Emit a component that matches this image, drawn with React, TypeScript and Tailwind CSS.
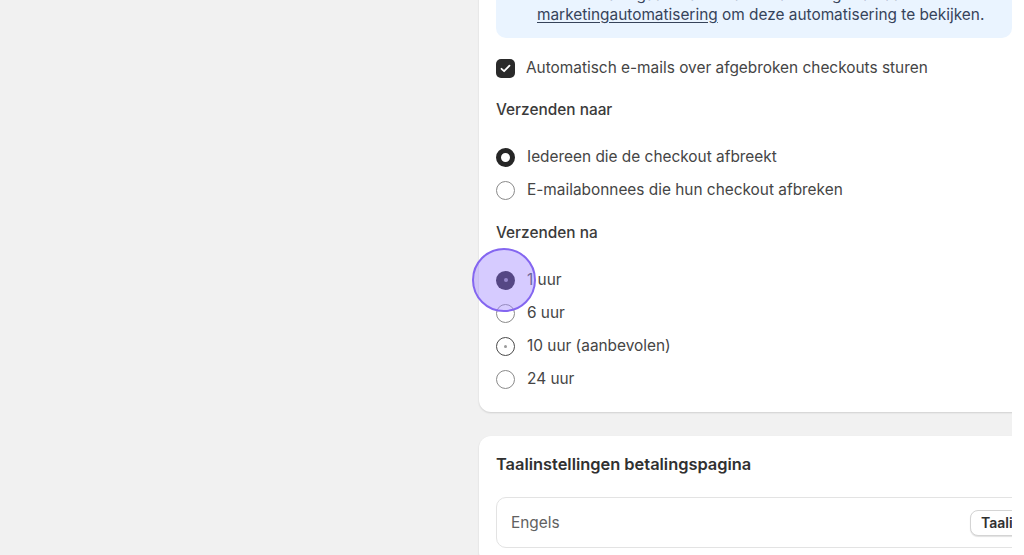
import React from "react";

type RadioState = "checked" | "unchecked" | "pressed" | "hover";

const Radio: React.FC<{ state: RadioState }> = ({ state }) => {
  if (state === "checked") {
    return <span className="w-[19px] h-[19px] rounded-full border-[5px] border-[#262626] bg-white shrink-0" />;
  }
  if (state === "pressed") {
    return (
      <span className="w-[19px] h-[19px] rounded-full bg-[#14101f] shrink-0 flex items-center justify-center">
        <span className="w-[4px] h-[4px] rounded-full bg-[#8d86a3]" />
      </span>
    );
  }
  if (state === "hover") {
    return (
      <span className="w-[19px] h-[19px] rounded-full border-[1.5px] border-[#4a4a4a] bg-white shrink-0 flex items-center justify-center">
        <span className="w-[3px] h-[3px] rounded-full bg-[#9a9a9a]" />
      </span>
    );
  }
  return <span className="w-[19px] h-[19px] rounded-full border-[1.5px] border-[#8a8a8a] bg-white shrink-0" />;
};

const RadioRow: React.FC<{ state: RadioState; label: string }> = ({ state, label }) => (
  <div className="flex items-center gap-3 h-5">
    <Radio state={state} />
    <span className="text-[15.4px] leading-5 text-[#454545]">{label}</span>
  </div>
);

export default function App() {
  return (
    <div className="flex w-full h-[555px] overflow-hidden bg-white font-['Inter',sans-serif]">
      <div className="w-[1012px] h-[555px] overflow-hidden bg-[#f1f1f1] shrink-0">
        <div className="ml-[479px] -mt-[43px] w-[600px] flex flex-col gap-6">
          {/* Afgebroken checkouts card */}
          <section className="bg-white rounded-xl shadow-[0_1px_2px_rgba(0,0,0,0.14)] pt-4 px-[17px] pb-[23px]">
            <div className="w-[516px] rounded-[10px] bg-[#eaf4ff] pt-3 pb-[13px] pl-[41px] pr-3 overflow-hidden">
              <p className="text-[15.4px] leading-5 text-[#36435a] whitespace-nowrap">
                Deze e-mails gaan via een automatisering. Ga naar
                <br />
                <span className="underline underline-offset-2">marketingautomatisering</span> om deze automatisering te bekijken.
              </p>
            </div>

            <label className="mt-[20px] flex items-center gap-[11px] h-5">
              <span className="w-[19px] h-[19px] rounded-[5px] bg-[#2a2a2a] flex items-center justify-center shrink-0">
                <svg width="11" height="9" viewBox="0 0 11 9" fill="none">
                  <path d="M1.5 4.8 4.1 7.2 9.5 1.6" stroke="white" strokeWidth="1.8" strokeLinecap="round" strokeLinejoin="round" />
                </svg>
              </span>
              <span className="text-[15.4px] leading-5 text-[#454545]">Automatisch e-mails over afgebroken checkouts sturen</span>
            </label>

            <h3 className="mt-[22px] text-[15.4px] leading-5 font-medium text-[#3a3a3a]">Verzenden naar</h3>
            <div className="mt-[27px] flex flex-col gap-[13px]">
              <RadioRow state="checked" label="Iedereen die de checkout afbreekt" />
              <RadioRow state="unchecked" label="E-mailabonnees die hun checkout afbreken" />
            </div>

            <h3 className="mt-[23px] text-[15.4px] leading-5 font-medium text-[#3a3a3a]">Verzenden na</h3>
            <div className="mt-[27px] flex flex-col gap-[13px]">
              <div className="relative">
                <RadioRow state="pressed" label="1 uur" />
                <span className="absolute -left-[24px] -top-[22px] w-[64px] h-[64px] rounded-full bg-[#a58bff]/45 border-2 border-[#8466f0]" />
              </div>
              <RadioRow state="unchecked" label="6 uur" />
              <RadioRow state="hover" label="10 uur (aanbevolen)" />
              <RadioRow state="unchecked" label="24 uur" />
            </div>
          </section>

          {/* Taalinstellingen card */}
          <section className="bg-white rounded-xl shadow-[0_1px_2px_rgba(0,0,0,0.14)] pt-[18px] px-[17px] pb-4">
            <h2 className="text-[16.4px] leading-5 font-semibold text-[#303030]">Taalinstellingen betalingspagina</h2>
            <div className="mt-[23px] h-[51px] rounded-[10px] border border-[#e3e3e3] flex items-center pl-[14px]">
              <span className="w-[459px] shrink-0 text-[15.4px] leading-5 text-[#616161]">Engels</span>
              <button className="shrink-0 h-[26px] px-[10px] rounded-lg border border-[#d4d4d4] bg-white shadow-[0_1px_1px_rgba(0,0,0,0.12)] text-[14px] font-semibold text-[#303030] whitespace-nowrap">
                Taalinstellingen
              </button>
            </div>
          </section>
        </div>
      </div>
      <div className="flex-1 bg-white" />
    </div>
  );
}
